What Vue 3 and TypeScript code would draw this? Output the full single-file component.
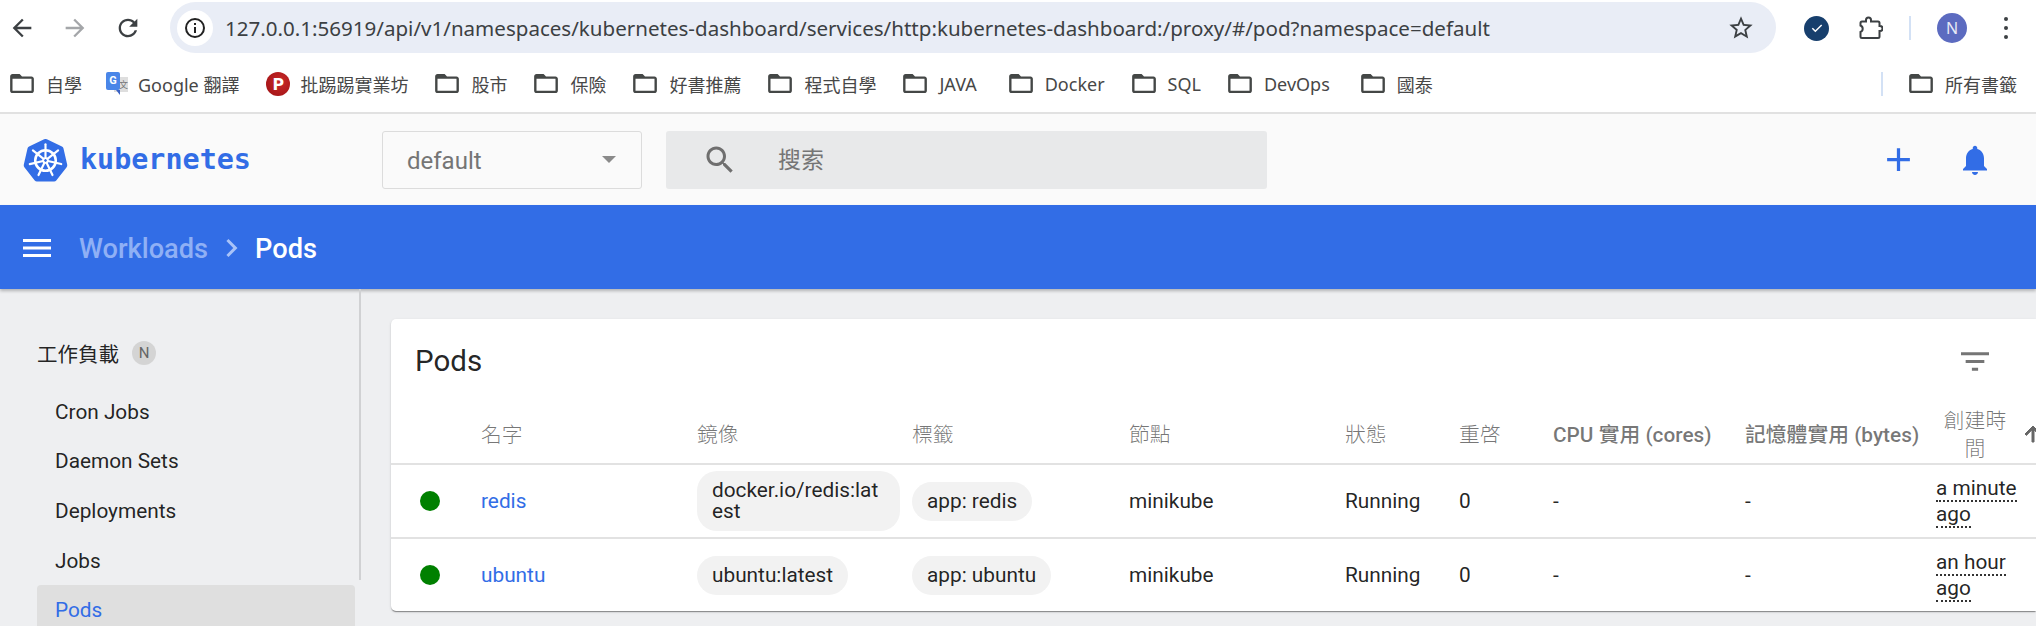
<template>
  <div class="page">
    <!-- browser chrome -->
    <div class="toolbar">
      <div class="nav-icons">
        <svg class="nav-icon" viewBox="0 0 24 24"><path :d="icons.back" /></svg>
        <svg class="nav-icon forward" viewBox="0 0 24 24"><path :d="icons.back" /></svg>
        <svg class="nav-icon" viewBox="0 0 24 24"><path :d="icons.refresh" /></svg>
      </div>
      <div class="omnibox">
        <span class="site-info">
          <svg viewBox="0 0 24 24" width="24" height="24">
            <circle cx="12" cy="12" r="9" fill="none" stroke="#222" stroke-width="2" />
            <rect x="11" y="11" width="2" height="6" fill="#222" />
            <rect x="11" y="7" width="2" height="2" fill="#222" />
          </svg>
        </span>
        <span class="url">127.0.0.1:56919/api/v1/namespaces/kubernetes-dashboard/services/http:kubernetes-dashboard:/proxy/#/pod?namespace=default</span>
        <svg class="star" viewBox="0 0 24 24"><path :d="icons.star" /></svg>
      </div>
      <div class="ext-icons">
        <span class="ext-check">
          <svg viewBox="0 0 24 24" width="16" height="16"><path d="M5 12.5l4.5 4.5L19 7.5" fill="none" stroke="#fff" stroke-width="2.2" /></svg>
        </span>
        <svg class="puzzle" viewBox="0 0 24 24"><path :d="icons.puzzle" /></svg>
        <span class="ext-divider"></span>
        <span class="avatar">N</span>
        <span class="kebab"><i></i><i></i><i></i></span>
      </div>
    </div>

    <div class="bookmarks">
      <div
        v-for="b in bookmarks"
        :key="b.label"
        class="bookmark"
        :class="{ tight: b.kind !== 'folder' }"
        :style="{ marginRight: (b.after ?? 27) + 'px' }"
      >
        <svg v-if="b.kind === 'folder'" class="folder" viewBox="2 4 20 16"><path :d="icons.folder" /></svg>
        <span v-else-if="b.kind === 'translate'" class="bm-translate"><i>文</i><b>G</b></span>
        <span v-else class="bm-ptt">P</span>
        <span>{{ b.label }}</span>
      </div>
      <span class="bm-divider"></span>
      <div class="bookmark all">
        <svg class="folder" viewBox="2 4 20 16"><path :d="icons.folder" /></svg>
        <span>所有書籤</span>
      </div>
    </div>

    <!-- dashboard header -->
    <header class="kd-header">
      <div class="brand">
        <svg class="logo" viewBox="0 0 46 44">
          <path d="M23 0.5a3 3 0 0 1 1.4.3l15.4 7.4a3 3 0 0 1 1.6 2l3.8 16.6a3 3 0 0 1-.6 2.5L34 43a3 3 0 0 1-2.3 1H14.3a3 3 0 0 1-2.3-1L1.400 29.300a3 3 0 0 1-.6-2.500L4.600 10.200a3 3 0 0 1 1.600-2L21.600.8a3 3 0 0 1 1.400-.3z" fill="#326de6" />
          <g stroke="#fff" fill="none">
            <circle cx="23" cy="22.500" r="10.500" stroke-width="2.600" />
            <circle cx="23" cy="22.500" r="2.400" stroke-width="1.800" />
            <path v-for="a in spokes" :key="a" :transform="`rotate(${a} 23 22.500)`" d="M23 20V6" stroke-width="2.200" stroke-linecap="round" />
          </g>
        </svg>
        <span class="brand-name">kubernetes</span>
      </div>
      <div class="ns-select">
        <span>default</span>
        <span class="caret"></span>
      </div>
      <div class="search">
        <svg viewBox="0 0 24 24"><path :d="icons.search" /></svg>
        <span>搜索</span>
      </div>
      <div class="actions">
        <svg class="add" viewBox="0 0 24 24"><path :d="icons.add" /></svg>
        <svg class="bell" viewBox="0 0 24 24"><path :d="icons.bell" /></svg>
      </div>
    </header>

    <div class="crumbs">
      <svg class="menu" viewBox="3 6 18 12" preserveAspectRatio="none"><path :d="icons.menu" /></svg>
      <span class="crumb-parent">Workloads</span>
      <svg class="chevron" viewBox="8 6 8 12"><path :d="icons.chevron" /></svg>
      <span class="crumb-current">Pods</span>
    </div>

    <div class="content">
      <nav class="sidebar">
        <div class="nav-title">
          <span>工作負載</span>
          <span class="ns-badge">N</span>
        </div>
        <div v-for="item in navItems" :key="item" class="nav-item" :class="{ active: item === 'Pods' }">{{ item }}</div>
      </nav>

      <main class="main">
        <section class="card">
          <div class="card-title">
            <span>Pods</span>
            <svg class="filter" viewBox="3 6 18 12"><path :d="icons.filter" /></svg>
          </div>
          <table>
            <colgroup>
              <col v-for="(w, i) in colWidths" :key="i" :style="{ width: w + 'px' }" />
            </colgroup>
            <thead>
              <tr>
                <th></th>
                <th v-for="h in headers" :key="h" :class="{ thin: !/[A-Za-z]/.test(h) }">{{ h }}</th>
                <th class="created thin">
                  <span>創建時間</span>
                  <svg class="sort" viewBox="4 4 16 16"><path :d="icons.up" /></svg>
                </th>
              </tr>
            </thead>
            <tbody>
              <tr v-for="pod in pods" :key="pod.name">
                <td><span class="dot"></span></td>
                <td><a class="pod-link">{{ pod.name }}</a></td>
                <td><span class="chip image">{{ pod.image }}</span></td>
                <td><span class="chip">{{ pod.label }}</span></td>
                <td>minikube</td>
                <td>Running</td>
                <td>0</td>
                <td>-</td>
                <td>-</td>
                <td class="age"><span>{{ pod.age }}</span></td>
              </tr>
            </tbody>
          </table>
        </section>
      </main>
    </div>
  </div>
</template>

<script setup lang="ts">
interface Bookmark {
  label: string
  kind: 'folder' | 'translate' | 'ptt'
  after?: number
}

interface Pod {
  name: string
  image: string
  label: string
  age: string
}

const icons = {
  back: 'M20 11H7.83l5.59-5.59L12 4l-8 8 8 8 1.41-1.41L7.83 13H20v-2z',
  refresh: 'M17.65 6.35C16.2 4.9 14.21 4 12 4c-4.42 0-7.99 3.58-7.99 8s3.57 8 7.99 8c3.73 0 6.84-2.55 7.73-6h-2.08c-.82 2.33-3.04 4-5.65 4-3.31 0-6-2.69-6-6s2.69-6 6-6c1.66 0 3.14.69 4.22 1.78L13 11h7V4l-2.35 2.35z',
  star: 'M22 9.24l-7.19-.62L12 2 9.19 8.63 2 9.24l5.46 4.73L5.82 21 12 17.27 18.18 21l-1.63-7.03L22 9.24zM12 15.4l-3.76 2.27 1-4.28-3.32-2.88 4.38-.38L12 6.1l1.71 4.04 4.38.38-3.32 2.88 1 4.28L12 15.4z',
  folder: 'M20 6h-8l-2-2H4c-1.1 0-1.99.9-1.99 2L2 18c0 1.1.9 2 2 2h16c1.1 0 2-.9 2-2V8c0-1.1-.9-2-2-2zm0 12H4V8h16v10z',
  puzzle: 'M3 5.5H7V4a2.5 2.5 0 0 1 5 0v1.5h7a1.5 1.5 0 0 1 1.5 1.5v3h.5a2.5 2.5 0 0 1 0 5h-.5v5.5a1.5 1.5 0 0 1-1.5 1.5H3a1.5 1.5 0 0 1-1.5-1.5v-4.5a3.5 3.5 0 0 0 0-6.5V7A1.5 1.5 0 0 1 3 5.5z',
  search: 'M15.5 14h-.79l-.28-.27C15.41 12.59 16 11.11 16 9.5 16 5.91 13.09 3 9.5 3S3 5.91 3 9.5 5.91 16 9.5 16c1.61 0 3.09-.59 4.23-1.57l.27.28v.79l5 4.99L20.49 19l-4.99-5zm-6 0C7.01 14 5 11.99 5 9.5S7.01 5 9.5 5 14 7.01 14 9.5 11.99 14 9.5 14z',
  add: 'M19 13h-6v6h-2v-6H5v-2h6V5h2v6h6v2z',
  bell: 'M12 22c1.1 0 2-.9 2-2h-4c0 1.1.9 2 2 2zm6-6v-5c0-3.07-1.63-5.64-4.5-6.32V4c0-.83-.67-1.5-1.5-1.5s-1.5.67-1.5 1.5v.68C7.64 5.36 6 7.92 6 11v5l-2 2v1h16v-1l-2-2z',
  menu: 'M3 18h18v-2H3v2zm0-5h18v-2H3v2zm0-7v2h18V6H3z',
  chevron: 'M10 6L8.59 7.41 13.17 12l-4.58 4.59L10 18l6-6z',
  filter: 'M10 18h4v-2h-4v2zM3 6v2h18V6H3zm3 7h12v-2H6v2z',
  up: 'M4 12l1.41 1.41L11 7.83V20h2V7.83l5.58 5.59L20 12l-8-8-8 8z'
}

const spokes = [0, 51.4, 102.8, 154.3, 205.7, 257.1, 308.6]

const bookmarks: Bookmark[] = [
  { label: '自學', kind: 'folder', after: 24 },
  { label: 'Google 翻譯', kind: 'translate' },
  { label: '批踢踢實業坊', kind: 'ptt' },
  { label: '股市', kind: 'folder' },
  { label: '保險', kind: 'folder' },
  { label: '好書推薦', kind: 'folder' },
  { label: '程式自學', kind: 'folder' },
  { label: 'JAVA', kind: 'folder', after: 32 },
  { label: 'Docker', kind: 'folder' },
  { label: 'SQL', kind: 'folder' },
  { label: 'DevOps', kind: 'folder', after: 31 },
  { label: '國泰', kind: 'folder' }
]

const navItems = ['Cron Jobs', 'Daemon Sets', 'Deployments', 'Jobs', 'Pods']

const headers = ['名字', '鏡像', '標籤', '節點', '狀態', '重啓', 'CPU 實用 (cores)', '記憶體實用 (bytes)']

const colWidths = [90, 216, 215, 217, 216, 114, 94, 192, 191, 100]

const pods: Pod[] = [
  { name: 'redis', image: 'docker.io/redis:latest', label: 'app: redis', age: 'a minute ago' },
  { name: 'ubuntu', image: 'ubuntu:latest', label: 'app: ubuntu', age: 'an hour ago' }
]
</script>

<style>
html,
body {
  margin: 0;
  overflow: hidden;
}
</style>

<style scoped>
.page {
  width: 2036px;
  height: 626px;
  overflow: hidden;
  background: #eeeff1;
  font-family: Roboto, "Noto Sans CJK TC", sans-serif;
}

.toolbar {
  height: 56px;
  display: flex;
  align-items: flex-start;
  background: #fff;
}

.nav-icons {
  width: 170px;
  height: 56px;
  display: flex;
  align-items: center;
  gap: 25px;
  padding-left: 8px;
  box-sizing: border-box;
}

.nav-icon {
  width: 28px;
  height: 28px;
  fill: #3c4043;
}

.nav-icon.forward {
  fill: #a4a6a9;
  transform: scaleX(-1);
}

.omnibox {
  width: 1606px;
  height: 51px;
  margin-top: 2px;
  display: flex;
  align-items: center;
  background: #e9edf6;
  border-radius: 26px;
}

.site-info {
  width: 36px;
  height: 36px;
  margin-left: 7px;
  border-radius: 50%;
  background: #fff;
  display: flex;
  align-items: center;
  justify-content: center;
}

.url {
  margin-left: 12px;
  flex: 1;
  font-family: "Noto Sans", sans-serif;
  font-size: 20.55px;
  color: #3c4043;
  white-space: nowrap;
}

.star {
  width: 28px;
  height: 28px;
  margin-right: 21px;
  fill: #3c4043;
}

.ext-icons {
  flex: 1;
  height: 56px;
  display: flex;
  align-items: center;
  padding-left: 28px;
}

.ext-check {
  width: 25px;
  height: 25px;
  border-radius: 50%;
  background: #173f6d;
  display: flex;
  align-items: center;
  justify-content: center;
}

.puzzle {
  width: 24px;
  height: 24px;
  margin-left: 30px;
  fill: none;
  stroke: #3c4043;
  stroke-width: 2;
}

.ext-divider {
  width: 2px;
  height: 24px;
  margin-left: 26px;
  background: #d3e1f5;
}

.avatar {
  width: 30px;
  height: 30px;
  margin-left: 26px;
  border-radius: 50%;
  background: #5c6bc0;
  color: #e8eaf6;
  font-family: "Noto Sans", sans-serif;
  font-size: 16px;
  display: flex;
  align-items: center;
  justify-content: center;
}

.kebab {
  margin-left: 37px;
  display: flex;
  flex-direction: column;
  gap: 5px;
}

.kebab i {
  width: 4px;
  height: 4px;
  border-radius: 50%;
  background: #3c4043;
}

.bookmarks {
  height: 58px;
  box-sizing: border-box;
  display: flex;
  align-items: center;
  padding-left: 10px;
  padding-bottom: 1px;
  background: #fff;
  border-bottom: 2px solid #e1e1e1;
  font-family: "Noto Sans", "Noto Sans CJK TC", sans-serif;
  font-size: 18px;
  color: #474747;
}

.bookmark {
  display: flex;
  align-items: center;
  gap: 12px;
  white-space: nowrap;
}

.bookmark.tight {
  gap: 10px;
}

.folder {
  width: 24px;
  height: 19px;
  fill: #444746;
}

.bm-translate {
  width: 22px;
  height: 24px;
  position: relative;
}

.bm-translate b {
  position: absolute;
  left: 0;
  top: 0;
  width: 14px;
  height: 18px;
  background: #4a86e8;
  border-radius: 2px;
  font: 700 11px/18px Roboto, sans-serif;
  color: #fff;
  text-align: center;
}

.bm-translate b::after {
  content: "";
  position: absolute;
  left: 10px;
  top: 18px;
  border-top: 5px solid #3b62c4;
  border-left: 4px solid transparent;
  border-right: 0 solid transparent;
}

.bm-translate i {
  position: absolute;
  right: 0;
  top: 5px;
  width: 14px;
  height: 15px;
  background: #dedede;
  color: #777;
  font: normal 9px/15px "Noto Sans CJK TC", sans-serif;
  text-align: right;
}

.bm-ptt {
  width: 24px;
  height: 24px;
  border-radius: 50%;
  background: radial-gradient(circle at 60% 40%, #c92a2a, #9c0f12);
  color: #fff;
  font: 900 17px/24px Roboto, sans-serif;
  text-align: center;
}

.bm-divider {
  width: 2px;
  height: 24px;
  margin-left: auto;
  margin-right: 26px;
  background: #d3e1f5;
}

.bookmark.all {
  margin-right: 19px;
}

.kd-header {
  height: 91px;
  display: flex;
  align-items: center;
  background: #fafafa;
}

.brand {
  width: 382px;
  padding-left: 23px;
  box-sizing: border-box;
  display: flex;
  align-items: center;
  gap: 12px;
}

.logo {
  width: 45px;
  height: 44px;
}

.brand-name {
  font-family: "DejaVu Sans Mono", monospace;
  font-weight: 700;
  font-size: 28.4px;
  color: #326de6;
}

.ns-select {
  width: 260px;
  height: 58px;
  box-sizing: border-box;
  padding: 0 25px 0 24px;
  display: flex;
  align-items: center;
  justify-content: space-between;
  background: #fafafa;
  border: 1px solid #dcdcdc;
  border-radius: 3px;
  font-size: 24px;
  color: #757575;
}

.ns-select span:first-child {
  padding-top: 2px;
}

.caret {
  width: 0;
  height: 0;
  border-left: 7px solid transparent;
  border-right: 7px solid transparent;
  border-top: 7px solid #8a8a8a;
}

.search {
  width: 601px;
  height: 58px;
  margin-left: 24px;
  display: flex;
  align-items: center;
  background: #e8e9ea;
  border-radius: 3px;
  font-size: 23px;
  color: #757575;
}

.search svg {
  width: 36px;
  height: 36px;
  margin-left: 36px;
  fill: #6f6f6f;
}

.search span {
  margin-left: 40px;
  padding-bottom: 3px;
}

.actions {
  margin-left: auto;
  display: flex;
  align-items: center;
  gap: 39px;
  padding-right: 43px;
}

.add {
  width: 39px;
  height: 39px;
  fill: #326de6;
}

.bell {
  width: 36px;
  height: 36px;
  fill: #326de6;
}

.crumbs {
  height: 84px;
  box-sizing: border-box;
  padding-top: 1px;
  position: relative;
  display: flex;
  align-items: center;
  background: #326de6;
  box-shadow: 0 2px 3px rgba(0, 0, 0, 0.25);
  font-size: 27.2px;
  font-weight: 500;
}

.crumb-parent,
.crumb-current {
  padding-top: 2px;
}

.menu {
  width: 28px;
  height: 18px;
  margin-left: 23px;
  fill: #fff;
}

.crumb-parent {
  margin-left: 28px;
  color: #8fb0f5;
}

.chevron {
  width: 13px;
  height: 18px;
  margin: 0 17px;
  fill: #a9c3f8;
}

.crumb-current {
  color: #fff;
}

.content {
  display: flex;
  height: 337px;
}

.sidebar {
  width: 360px;
  flex: none;
  position: relative;
  box-sizing: border-box;
  padding: 52px 5px 0 37px;
  font-size: 20.8px;
  color: rgba(0, 0, 0, 0.87);
}

.sidebar::after {
  content: "";
  position: absolute;
  top: 0;
  right: -1px;
  width: 2px;
  height: 291px;
  background: #d0d1d3;
}

.nav-title {
  height: 24px;
  margin-bottom: 22px;
  display: flex;
  align-items: center;
  gap: 13px;
  font-size: 20.5px;
}

.ns-badge {
  width: 24px;
  height: 24px;
  border-radius: 50%;
  background: #d4d4d4;
  color: #666;
  font-size: 15px;
  display: flex;
  align-items: center;
  justify-content: center;
}

.nav-item {
  height: 49.6px;
  padding-left: 18px;
  display: flex;
  align-items: center;
  border-radius: 4px;
}

.nav-item.active {
  background: #dfdfdf;
  color: #326de6;
}

.main {
  flex: 1;
  min-width: 0;
  padding: 30px 0 0 31px;
}

.card {
  background: #fff;
  border-radius: 5px 0 0 5px;
  box-shadow: 0 2px 1px -1px rgba(0, 0, 0, 0.25), 0 1px 1px rgba(0, 0, 0, 0.18), 0 1px 3px rgba(0, 0, 0, 0.12);
}

.card-title {
  height: 84px;
  padding: 0 47px 0 24px;
  display: flex;
  align-items: center;
  justify-content: space-between;
  font-size: 29.5px;
  color: rgba(0, 0, 0, 0.87);
}

.filter {
  width: 28px;
  height: 19px;
  fill: #757575;
}

table {
  width: 1645px;
  table-layout: fixed;
  border-collapse: collapse;
}

th {
  box-sizing: border-box;
  height: 61px;
  padding: 3px 0 0;
  text-align: left;
  font-size: 20.8px;
  font-weight: 500;
  color: rgba(0, 0, 0, 0.54);
  line-height: 28px;
  white-space: nowrap;
}

th.thin {
  font-weight: 300;
}

th.created {
  position: relative;
  white-space: normal;
  text-align: center;
}

th.created span {
  display: block;
  width: 64px;
  margin-left: 7px;
}

.sort {
  position: absolute;
  left: 89px;
  top: 21px;
  width: 16px;
  height: 20px;
  fill: #666;
  stroke: #666;
  stroke-width: 1;
}

td {
  box-sizing: border-box;
  height: 73.5px;
  padding: 1px 0 0;
  border-top: 2px solid #e2e2e2;
  font-size: 20.8px;
  line-height: 26px;
  color: rgba(0, 0, 0, 0.87);
}

.dot {
  display: block;
  width: 20px;
  height: 20px;
  margin-left: 29px;
  border-radius: 50%;
  background: #008000;
}

.pod-link {
  color: #326de6;
}

.chip {
  display: inline-block;
  box-sizing: border-box;
  max-width: 203px;
  padding: 9px 15px;
  border-radius: 20px;
  background: #f2f2f2;
  line-height: 21px;
  word-break: break-all;
  vertical-align: middle;
}

.age span {
  border-bottom: 2px dotted #333;
}
</style>
